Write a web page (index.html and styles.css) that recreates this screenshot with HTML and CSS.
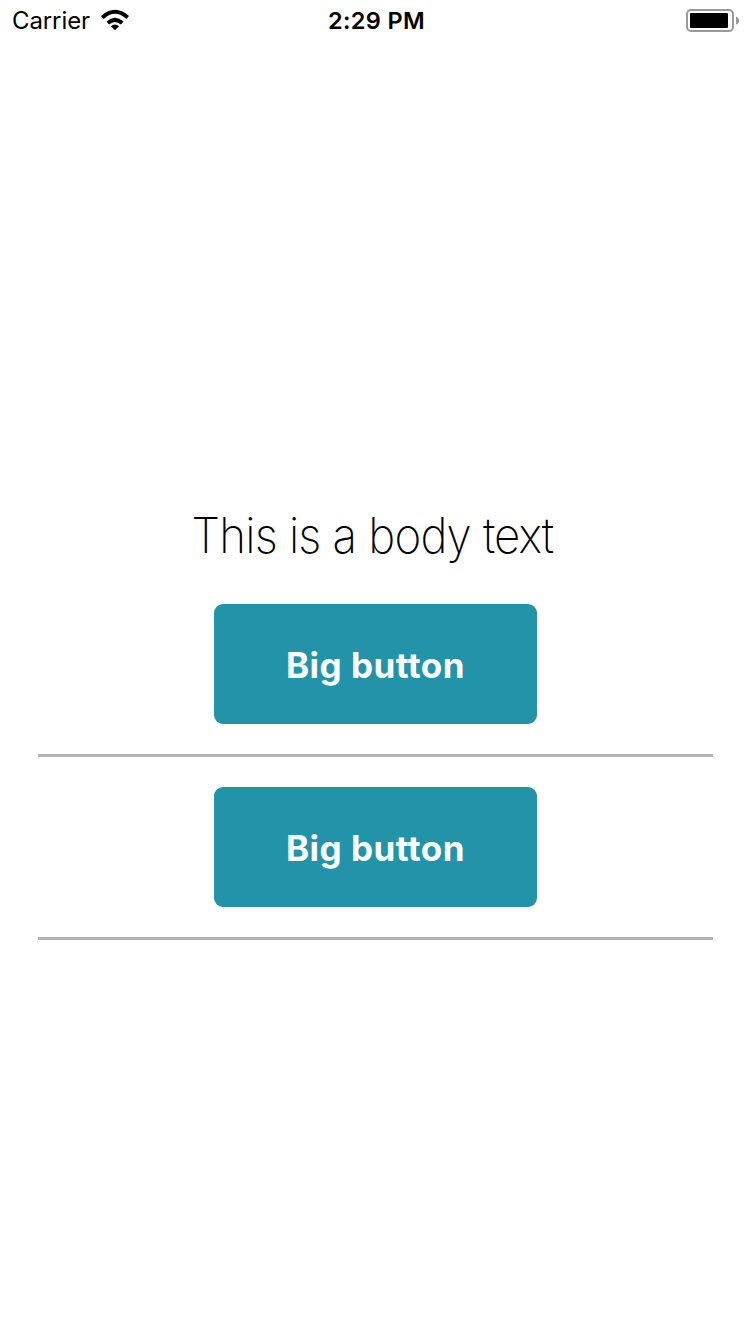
FILE: index.html
```html
<!DOCTYPE html>
<html lang="en">
<head>
<meta charset="utf-8">
<title>Buttons</title>
<link rel="stylesheet" href="styles.css">
</head>
<body>
<header class="status">
  <div class="carrier"><span class="carrier-name">Carrier</span>
    <svg class="wifi" width="30" height="22" viewBox="0 0 30 22"><path d="M15 21.2 10.9 17.3Q15 13.9 19.1 17.3Z"/><path d="M7.8 14Q15 7.8 22.2 14M2.3 8.5Q15-2.9 27.7 8.5" fill="none" stroke="#000" stroke-width="3.9"/></svg>
  </div>
  <div class="time">2:29 PM</div>
  <svg class="battery" width="54" height="24" viewBox="0 0 54 24"><rect x="1" y="1" width="46" height="21" rx="4" fill="none" stroke="#999" stroke-width="2"/><rect x="4" y="4" width="38" height="15" rx="1"/><path d="M50 7.5Q53 8.5 53 11.5T50 15.5Z" fill="#999"/></svg>
</header>
<main class="content">
  <p class="body-text"><span class="body-copy">This is a body text</span></p>
  <section class="row"><button class="big-button"><span class="label">Big button</span></button></section>
  <section class="row"><button class="big-button"><span class="label">Big button</span></button></section>
</main>
</body>
</html>
```
FILE: styles.css
```css
* { box-sizing: border-box; }
body { margin: 0; height: 1334px; background: #fff; color: #000; font-family: Inter, "Liberation Sans", sans-serif; }
.status { height: 42px; padding: 0 10px 0 12px; display: grid; grid-template-columns: 1fr auto 1fr; align-items: center; font-size: 24px; }
.carrier { display: flex; align-items: center; gap: 10px; padding-bottom: 2px; }
.carrier-name { letter-spacing: -0.1px; }
.time { font-weight: 600; font-size: 23.5px; letter-spacing: 0.35px; padding: 0 0 1px 1px; }
.battery { justify-self: end; }
.content { padding: 462px 37px 0 38px; }
.body-text { margin: 0; height: 70px; line-height: 63px; text-align: center; font-size: 48.5px; font-weight: 200; white-space: nowrap; }
.body-copy { display: inline-block; transform: scaleX(0.94); letter-spacing: -0.85px; margin-left: -6px; }
.row { height: 183px; padding-top: 30px; display: flex; justify-content: center; align-items: flex-start; border-bottom: 3px solid #b4b4b4; }
.big-button { width: 323px; height: 120px; padding: 2px 0 0; border: 0; border-radius: 9px; background: #2393a9; color: #fff; font: 700 35px Inter, sans-serif; font-variant-ligatures: none; font-feature-settings: "calt" 0; letter-spacing: 0.5px; white-space: nowrap; }
```
